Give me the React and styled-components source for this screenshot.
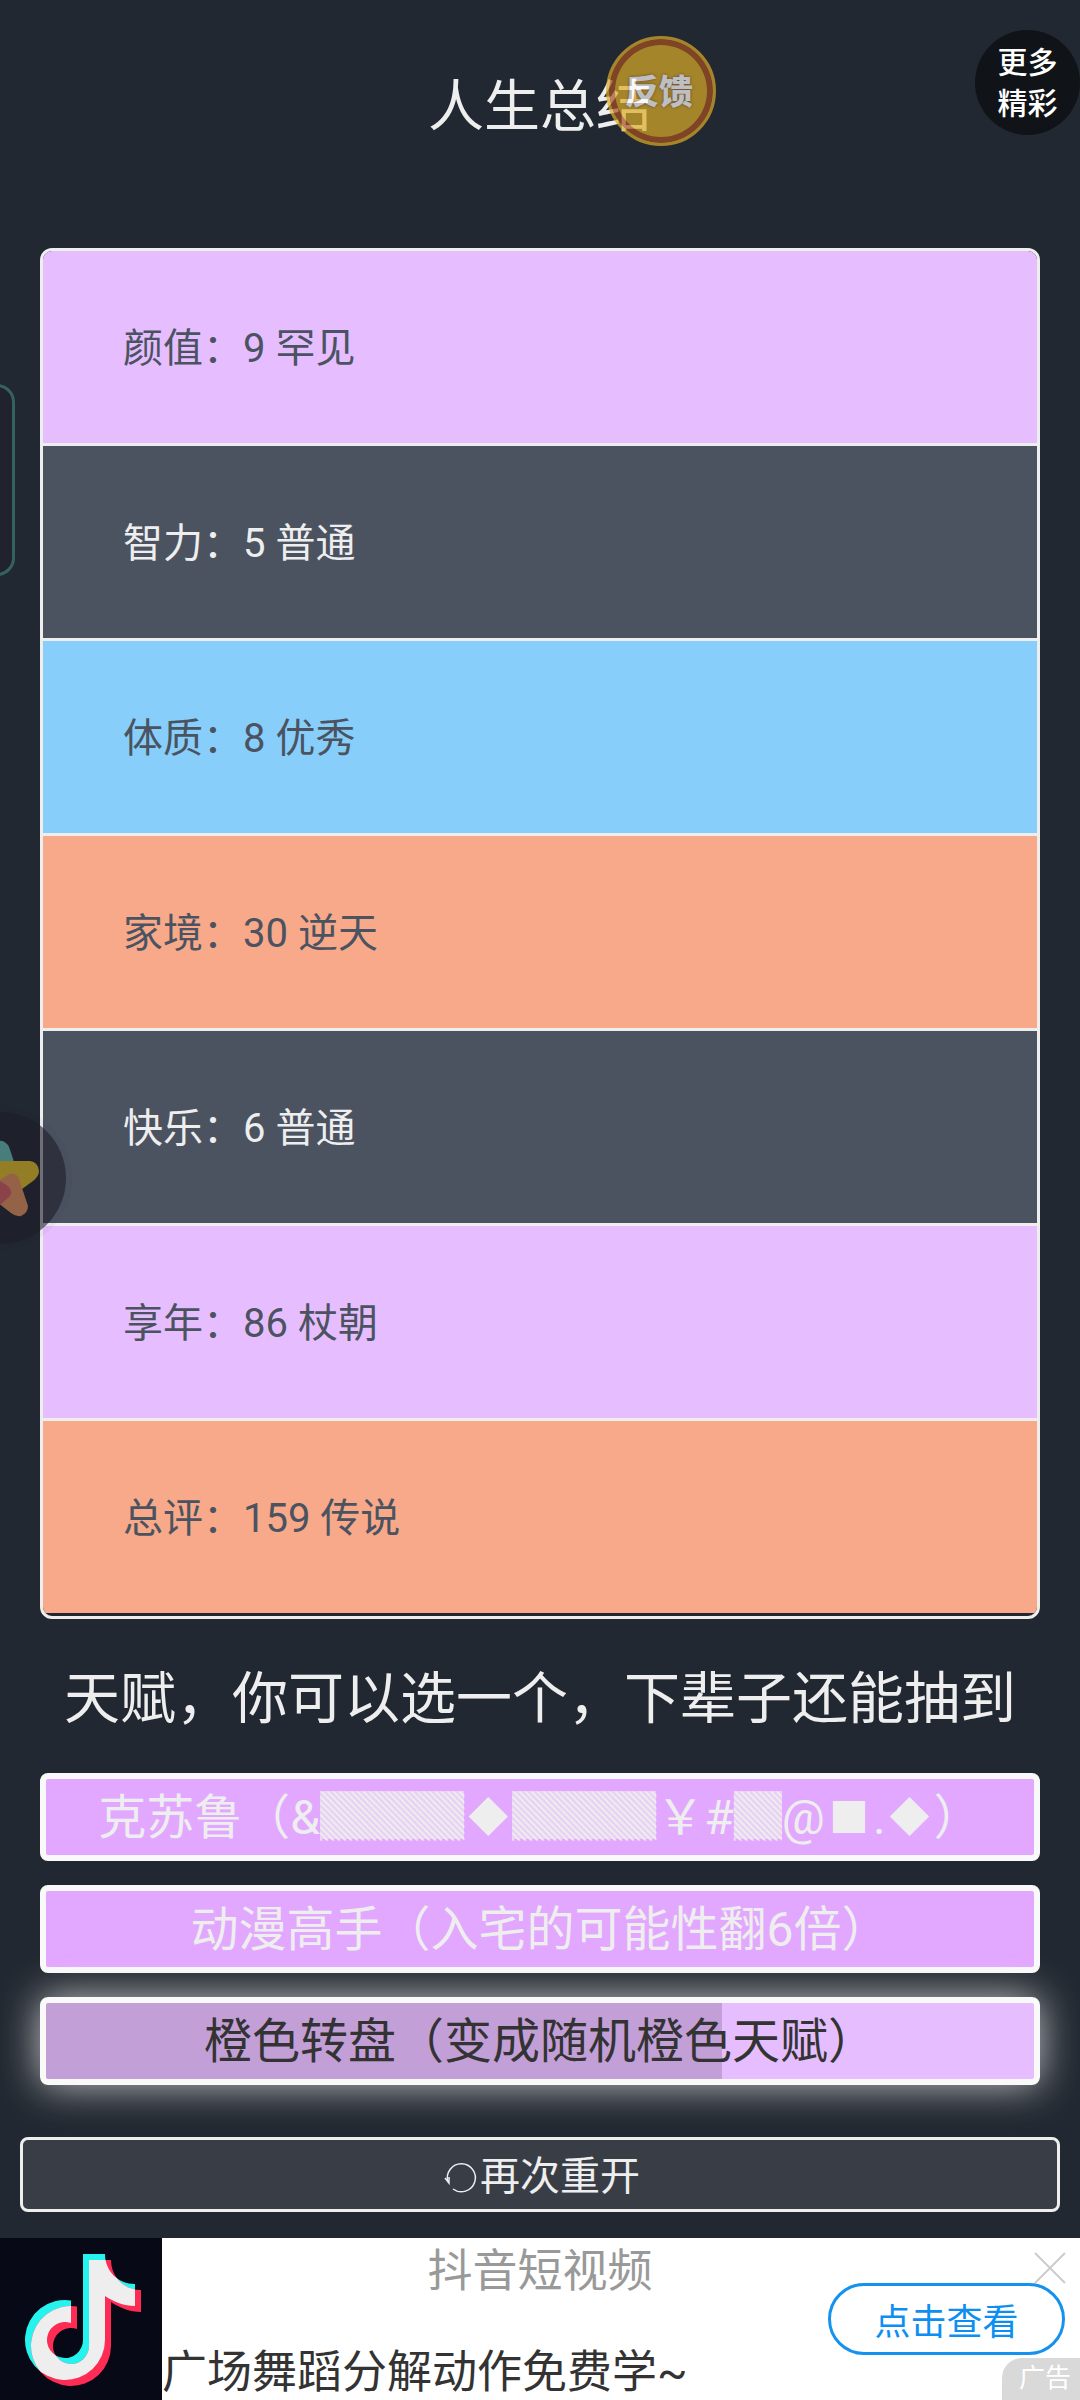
import React from 'react'
import styled, { createGlobalStyle } from 'styled-components'

const GlobalStyle = createGlobalStyle`
    * {
        box-sizing: border-box;
    }
    body {
        margin: 0;
        background-color: #222831;
        color: #eee;
        font-family: Roboto, "Noto Sans CJK SC", sans-serif;
    }
    h1, h2, p, ul {
        margin: 0;
        padding: 0;
        font-weight: 400;
    }
    button {
        font-family: inherit;
        color: inherit;
        cursor: pointer;
    }
`
const Page = styled.div`
    position: relative;
    min-height: 100vh;
    display: flex;
    flex-direction: column;
    overflow: hidden;
`
const Title = styled.h1`
    padding: 67px 0 101px;
    font-size: 56px;
    line-height: 80px;
    text-align: center;
`
const SubTitle = styled.h2`
    padding: 40px 0 34px;
    font-size: 56px;
    line-height: 80px;
    text-align: center;
`
const Summary = styled.ul`
    margin: 0 40px;
    padding-bottom: 3px;
    border: solid 3px #eee;
    border-radius: 12px;
    list-style: none;
    overflow: hidden;
`
const levels = {
    normal: ['#4b5361', '#eee'],
    good: ['#87cefa', '#4b5361'],
    rare: ['#e6beff', '#4b5361'],
    legend: ['#f7a98a', '#4b5361'],
}
const SummaryRow = styled.li`
    padding: 68px 80px 64px;
    font-size: 40px;
    line-height: 60px;
    background-color: ${(props) => levels[props.$level][0]};
    color: ${(props) => levels[props.$level][1]};
    & + & {
        border-top: solid 3px #eee;
    }
`
const TalentList = styled.div`
    display: flex;
    flex-direction: column;
    gap: 24px;
    margin: 0 40px;
`
const Talent = styled.button`
    height: 88px;
    padding: 2px 0 0;
    border: solid 6px #f9f9f9;
    border-radius: 8px;
    font-size: 48px;
    line-height: 70px;
    white-space: nowrap;
    color: ${(props) => (props.$selected ? '#333' : '#eee')};
    background: ${(props) => (props.$selected
        ? 'linear-gradient(90deg, #c39fd8 68.4%, #e6beff 68.4%)'
        : '#e2a7ff')};
    box-shadow: ${(props) => (props.$selected ? '0 0 40px rgba(238, 238, 238, 0.8)' : 'none')};
`
// fills the gaps of the hatching so that the blocks look nearly solid
const Shade = styled.span`
    font-family: "Noto Sans CJK SC", sans-serif;
    line-height: 48px;
    background: linear-gradient(rgba(238, 238, 238, 0.6), rgba(238, 238, 238, 0.6)) 0 13px / 100% 48px no-repeat;
`
const Shape = styled.span`
    display: inline-block;
    width: 48px;
    font-size: 40px;
    line-height: 40px;
    text-align: center;
    vertical-align: 2px;
`
const Restart = styled.button`
    display: flex;
    justify-content: center;
    align-items: center;
    height: 75px;
    margin: 52px 20px 26px;
    padding: 4px 0 0;
    border: solid 3px #eee;
    border-radius: 8px;
    background-color: #393e46;
    font-size: 40px;
    line-height: 60px;
`
const Ad = styled.section`
    position: relative;
    display: flex;
    height: 162px;
    margin-top: auto;
    background-color: #fff;
`
const AdText = styled.div`
    flex: 1;
    display: flex;
    flex-direction: column;
    justify-content: space-between;
    padding-top: 4px;
    font-size: 45px;
    line-height: 60px;
    color: #333;
`
const AdName = styled.p`
    padding-right: 162px;
    text-align: center;
    color: #999;
`
const AdSlogan = styled.p`
    line-height: 54px;
`
const AdButton = styled.button`
    position: absolute;
    right: 15px;
    top: 45px;
    width: 237px;
    height: 72px;
    border: solid 3px #1592ee;
    border-radius: 36px;
    background-color: #fff;
    color: #0d8ff2;
    font-size: 36px;
`
const AdClose = styled.button`
    position: absolute;
    right: 14px;
    top: 14px;
    width: 32px;
    height: 32px;
    padding: 0;
    border: none;
    background: none;
    line-height: 0;
`
const AdTag = styled.span`
    position: absolute;
    right: 0;
    bottom: 0;
    width: 78px;
    height: 42px;
    padding-left: 8px;
    border-top-left-radius: 20px;
    background-color: #d9d9d9;
    color: #fff;
    font-size: 26px;
    line-height: 40px;
    text-align: center;
`
const Feedback = styled.button`
    position: absolute;
    left: calc(50% + 66px);
    top: 36px;
    width: 110px;
    height: 110px;
    padding: 0 4px 4px 0;
    border: solid 3px #ddad27;
    border-radius: 50%;
    background-color: #ddad27;
    box-shadow: inset 0 0 0 6px #a74f21;
    opacity: 0.7;
    color: #fff;
    font-size: 34px;
    font-weight: 900;
    text-shadow: 0 0 3px #7a4a3a;
`
const More = styled.button`
    position: absolute;
    right: 0;
    top: 30px;
    width: 105px;
    height: 105px;
    padding: 0;
    border: none;
    border-radius: 50%;
    background-color: #101418;
    color: #fff;
    font-size: 30px;
    font-weight: 500;
    line-height: 41px;
`
const SidePanel = styled.div`
    position: absolute;
    left: -40px;
    top: 384px;
    width: 55px;
    height: 192px;
    border: solid 3px #36625d;
    border-radius: 18px;
    background-color: #20222e;
`
const FloatBall = styled.button`
    position: absolute;
    left: -66px;
    top: 1112px;
    width: 132px;
    height: 132px;
    padding: 0;
    border: none;
    border-radius: 50%;
    background-color: rgba(28, 26, 40, 0.6);
    box-shadow: 0 0 0 6px rgba(28, 26, 40, 0.04);
`

const rows = [
    { label: '颜值', value: '9 罕见', level: 'rare' },
    { label: '智力', value: '5 普通', level: 'normal' },
    { label: '体质', value: '8 优秀', level: 'good' },
    { label: '家境', value: '30 逆天', level: 'legend' },
    { label: '快乐', value: '6 普通', level: 'normal' },
    { label: '享年', value: '86 杖朝', level: 'rare' },
    { label: '总评', value: '159 传说', level: 'legend' },
]

const talents = [
    '克苏鲁（&▓▓▓◆▓▓▓￥#▓@■.◆）',
    '动漫高手（入宅的可能性翻6倍）',
    '橙色转盘（变成随机橙色天赋）',
]

const renderTalent = (text) => {
    return text.split(/(▓+|[◆■])/).map((part, index) => {
        if (part.startsWith('▓')) return <Shade key={index}>{part}</Shade>
        if (part === '◆' || part === '■') return <Shape key={index}>{part}</Shape>
        return part
    })
}

const RestartIcon = () => (
    <svg width="40" height="40" viewBox="0 0 40 40" fill="none" stroke="#eee" strokeWidth="1.5">
        <path d="M8 25A14 14 0 1 1 13 32" />
        <path d="M5 21L9 26V20" />
    </svg>
)

const notePath = 'M83 16H105C105 33 118 46 135 46V68C124 68 114 64 105 58V102A40 40 0 1 1 71 62.4V85A18 18 0 1 0 83 102Z'

const DouyinLogo = () => (
    <svg width="162" height="162" viewBox="0 0 162 162">
        <defs>
            <clipPath id="note">
                <path d={notePath} />
            </clipPath>
        </defs>
        <rect width="162" height="162" fill="#080916" />
        <path d={notePath} fill="#25f4ee" />
        <path d={notePath} fill="#fe2c55" transform="translate(6 6)" />
        <g clipPath="url(#note)">
            <path d={notePath} fill="#eee" transform="translate(6 6)" />
        </g>
    </svg>
)

const Star = () => (
    <svg width="132" height="132" viewBox="-66 -66 132 132">
        <path fill="#477e7c" d="M-12 -14L-8 -32Q0 -42 8 -33Q9 -32 14 -16V-10H-12Z" />
        <path fill="#937e26" d="M-12 -17H30Q38 -16 39 -7Q39 -2 33 3L22 11L-10 14Z" />
        <path fill="#946347" d="M-6 6L6 -2Q15 -8 19 1L28 28Q28 35 21 38Q16 39 11 35L-6 22Z" />
        <path fill="#8c4249" d="M-10 0L0 3L8 8Q14 14 9 19L0 27L-10 30Z" />
    </svg>
)

const App = () => {
    return (
        <Page>
            <GlobalStyle />
            <Title>人生总结</Title>
            <Summary>
                {rows.map((item) => (
                    <SummaryRow key={item.label} $level={item.level}>
                        {item.label}：{item.value}
                    </SummaryRow>
                ))}
            </Summary>
            <SubTitle>天赋，你可以选一个，下辈子还能抽到</SubTitle>
            <TalentList>
                {talents.map((item, index) => (
                    <Talent key={item} $selected={index === 2}>{renderTalent(item)}</Talent>
                ))}
            </TalentList>
            <Restart>
                <RestartIcon />
                再次重开
            </Restart>
            <Ad>
                <DouyinLogo />
                <AdText>
                    <AdName>抖音短视频</AdName>
                    <AdSlogan>广场舞蹈分解动作免费学~</AdSlogan>
                </AdText>
                <AdClose aria-label="关闭">
                    <svg width="32" height="32" stroke="#ccc" strokeWidth="2">
                        <path d="M1 1L31 31M31 1L1 31" />
                    </svg>
                </AdClose>
                <AdButton>点击查看</AdButton>
                <AdTag>广告</AdTag>
            </Ad>
            <SidePanel />
            <FloatBall aria-label="菜单">
                <Star />
            </FloatBall>
            <Feedback>反馈</Feedback>
            <More>更多<br />精彩</More>
        </Page>
    )
}

export default App
